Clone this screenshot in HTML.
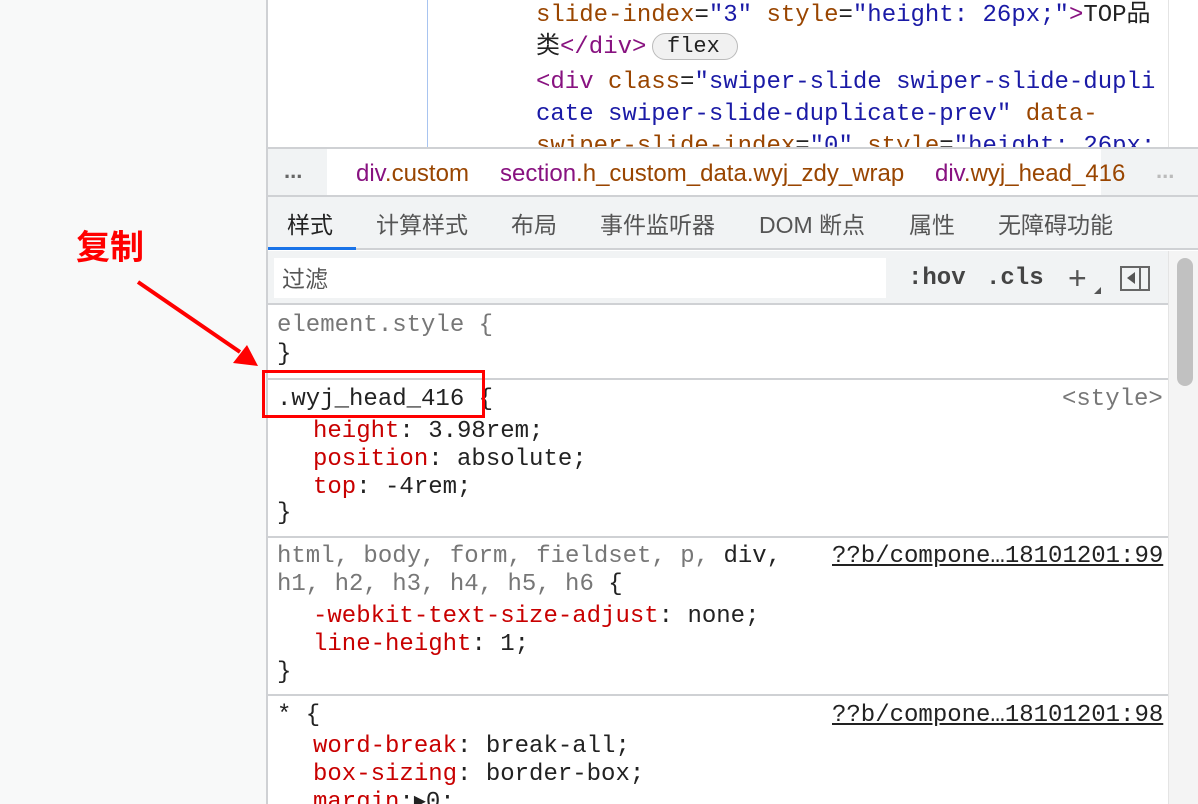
<!DOCTYPE html>
<html><head><meta charset="utf-8"><style>
*{margin:0;padding:0;box-sizing:border-box}
html,body{width:1198px;height:804px;overflow:hidden}
body{background:#f8f9f9;position:relative;font-family:"Liberation Sans","Noto Sans CJK SC",sans-serif}
.a{position:absolute;white-space:pre}
.m{font-family:"Liberation Mono","Noto Sans CJK SC",monospace;font-size:24px;line-height:28px;letter-spacing:0;color:#222;transform:translateY(2px)}
.tag{color:#881280}.at{color:#994500}.v{color:#1a1aa6}.p{color:#c80000}
.u{text-decoration:underline;color:#222}
.t{font-size:23px;line-height:28px;color:#555}
</style></head><body>
<div class="a" style="left:266px;top:0;width:932px;height:804px;background:#fff;border-left:2px solid #cfd1d4"></div>
<div class="a" style="left:427px;top:0;width:1px;height:148px;background:#a8c4f0"></div>
<div class="a" style="left:1168px;top:0;width:1px;height:148px;background:#e4e4e4"></div>
<div class="a m" style="left:536px;top:0px"><span class="at">slide-index</span>=<span class="v">"3"</span> <span class="at">style</span>=<span class="v">"height: 26px;"</span><span class="tag">&gt;</span>TOP品</div>
<div class="a m" style="left:536px;top:32px">类<span class="tag">&lt;/div&gt;</span></div>
<div class="a" style="left:652px;top:33px;width:86px;height:27px;border:1px solid #bbb;border-radius:14px;background:#f1f1f1;font-family:'Liberation Mono',monospace;font-size:22px;line-height:25px;padding-left:14px;color:#222">flex</div>
<div class="a m" style="left:536px;top:67px"><span class="tag">&lt;div</span> <span class="at">class</span>=<span class="v">"swiper-slide swiper-slide-dupli</span></div>
<div class="a m" style="left:536px;top:99px"><span class="v">cate swiper-slide-duplicate-prev"</span> <span class="at">data-</span></div>
<div class="a" style="left:536px;top:131px;height:17px;overflow:hidden"><div class="m"><span class="at">swiper-slide-index</span>=<span class="v">"0"</span> <span class="at">style</span>=<span class="v">"height: 26px;</span></div></div>
<div class="a" style="left:268px;top:147px;width:930px;height:50px;background:#f1f3f4;border-top:2px solid #cfd1d4;border-bottom:2px solid #cfd1d4"></div>
<div class="a" style="left:327px;top:149px;width:774px;height:46px;background:#fff"></div>
<div class="a" style="left:284px;top:158px;font-size:22px;color:#666;font-weight:bold">...</div>
<div class="a" style="left:1156px;top:158px;font-size:22px;color:#bbb;font-weight:bold">...</div>
<div class="a" style="left:356px;top:160px;font-size:24px;line-height:28px"><span class="tag">div</span><span class="at">.custom</span></div>
<div class="a" style="left:500px;top:160px;font-size:24px;line-height:28px"><span class="tag">section</span><span class="at">.h_custom_data.wyj_zdy_wrap</span></div>
<div class="a" style="left:935px;top:160px;font-size:24px;line-height:28px"><span class="tag">div</span><span class="at">.wyj_head_416</span></div>
<div class="a" style="left:268px;top:197px;width:930px;height:53px;background:#f1f3f4;border-bottom:2px solid #cfd1d4"></div>
<div class="a" style="left:268px;top:247px;width:88px;height:3px;background:#1a73e8"></div>
<div class="a t" style="top:211px;left:287px;color:#222">样式</div>
<div class="a t" style="top:211px;left:376px">计算样式</div>
<div class="a t" style="top:211px;left:511px">布局</div>
<div class="a t" style="top:211px;left:600px">事件监听器</div>
<div class="a t" style="top:211px;left:759px">DOM 断点</div>
<div class="a t" style="top:211px;left:909px">属性</div>
<div class="a t" style="top:211px;left:998px">无障碍功能</div>
<div class="a" style="left:268px;top:251px;width:900px;height:54px;background:#f1f3f4;border-bottom:2px solid #cfd1d4"></div>
<div class="a" style="left:274px;top:258px;width:612px;height:40px;background:#fff"></div>
<div class="a t" style="left:282px;top:265px">过滤</div>
<div class="a m" style="left:908px;top:263px;font-weight:bold;color:#444">:hov</div>
<div class="a m" style="left:986px;top:263px;font-weight:bold;color:#444">.cls</div>
<div class="a" style="left:1068px;top:260px;font-size:32px;color:#555">+</div>
<div class="a" style="left:1094px;top:287px;width:0;height:0;border-left:7px solid transparent;border-bottom:7px solid #555"></div>
<div class="a" style="left:1120px;top:266px;width:30px;height:25px;border:2px solid #666"></div>
<div class="a" style="left:1139px;top:266px;width:2px;height:25px;background:#666"></div>
<div class="a" style="left:1127px;top:272px;width:0;height:0;border-top:6px solid transparent;border-bottom:6px solid transparent;border-right:8px solid #555"></div>
<div class="a" style="left:1168px;top:251px;width:30px;height:553px;background:#f4f4f4;border-left:1px solid #e4e4e4"></div>
<div class="a" style="left:1177px;top:258px;width:16px;height:128px;background:#c1c1c1;border-radius:8px"></div>
<div class="a m" style="left:277px;top:310px;color:#777">element.style {</div>
<div class="a m" style="left:277px;top:339px">}</div>
<div class="a" style="left:268px;top:378px;width:900px;height:2px;background:#cfd1d4"></div>
<div class="a m" style="left:277px;top:384px">.wyj_head_416 {</div>
<div class="a m" style="left:1062px;top:384px;color:#777">&lt;style&gt;</div>
<div class="a m" style="left:313px;top:416px"><span class="p">height</span>: 3.98rem;</div>
<div class="a m" style="left:313px;top:444px"><span class="p">position</span>: absolute;</div>
<div class="a m" style="left:313px;top:472px"><span class="p">top</span>: -4rem;</div>
<div class="a m" style="left:277px;top:498px">}</div>
<div class="a" style="left:268px;top:536px;width:900px;height:2px;background:#cfd1d4"></div>
<div class="a m" style="left:277px;top:541px;color:#777">html, body, form, fieldset, p, <span style="color:#222">div,</span></div>
<div class="a m u" style="left:832px;top:541px">??b/compone…18101201:99</div>
<div class="a m" style="left:277px;top:569px;color:#777">h1, h2, h3, h4, h5, h6 <span style="color:#222">{</span></div>
<div class="a m" style="left:313px;top:601px"><span class="p">-webkit-text-size-adjust</span>: none;</div>
<div class="a m" style="left:313px;top:629px"><span class="p">line-height</span>: 1;</div>
<div class="a m" style="left:277px;top:657px">}</div>
<div class="a" style="left:268px;top:694px;width:900px;height:2px;background:#cfd1d4"></div>
<div class="a m" style="left:277px;top:700px">* {</div>
<div class="a m u" style="left:832px;top:700px">??b/compone…18101201:98</div>
<div class="a m" style="left:313px;top:731px"><span class="p">word-break</span>: break-all;</div>
<div class="a m" style="left:313px;top:759px"><span class="p">box-sizing</span>: border-box;</div>
<div class="a m" style="left:313px;top:787px"><span class="p">margin</span>:▸0;</div>
<div class="a" style="left:262px;top:370px;width:223px;height:48px;border:3px solid #f00"></div>
<div class="a" style="left:76px;top:220px;font-size:34px;font-weight:bold;color:#f00;font-family:'Noto Sans CJK SC',sans-serif">复制</div>
<svg class="a" style="left:0;top:0" width="300" height="420"><line x1="138" y1="282" x2="240" y2="352" stroke="#f00" stroke-width="4"/><polygon points="258,366 233,363 247,345" fill="#f00"/></svg>
</body></html>
